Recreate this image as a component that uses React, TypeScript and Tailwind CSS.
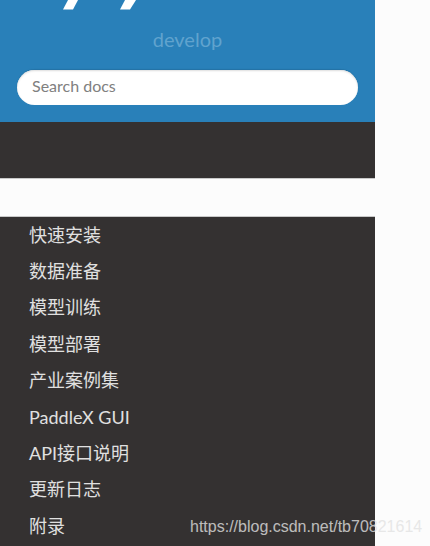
const ITEMS = ["快速安装", "数据准备", "模型训练", "模型部署", "产业案例集", "PaddleX GUI", "API接口说明", "更新日志", "附录"];

export default function App() {
  return (
    <div className="relative h-[546px] w-[430px] overflow-hidden bg-[#fcfcfc] font-['Lato','Noto_Sans_CJK_SC',sans-serif]">
      <div className="w-[375px]">
        <div className="h-[122px] bg-[#2980b9] flex flex-col items-center">
          <svg width="375" height="10" viewBox="0 0 375 10" className="shrink-0 block">
            <polygon points="68,0 78,0 73,9.5 63,9.5" fill="#fff" />
            <polygon points="125,0 136,0 130,9.5 120,9.5" fill="#fff" />
          </svg>
          <div className="mt-[17px] text-[20px] leading-6 text-[#60a3ce]">develop</div>
          <div className="mt-[19px] flex h-[35px] w-[341px] items-center rounded-full bg-white pb-[4px] pl-[15px] text-[16px] text-[#808080] shadow-[0_-1px_1px_#2472a6,inset_0_1px_2px_#ddd]">
            Search docs
          </div>
        </div>
        <div className="h-[56px] bg-[#343131]" />
        <div className="h-[39px] bg-[#fcfcfc] border-y border-[#c9c9c9]" />
        <ul className="h-[329px] bg-[#343131] pl-[29px] text-[18px] text-[#e0e0e0]">
          {ITEMS.map((item) => (
            <li key={item} className="flex h-[36.4px] items-center whitespace-nowrap">
              {item}
            </li>
          ))}
        </ul>
      </div>
      <div className="absolute left-[190px] top-[515px] font-['Liberation_Sans',sans-serif] text-[16px] leading-6 text-[#e2e2e2]/80 whitespace-nowrap">
        https://blog.csdn.net/tb70821614
      </div>
    </div>
  );
}
